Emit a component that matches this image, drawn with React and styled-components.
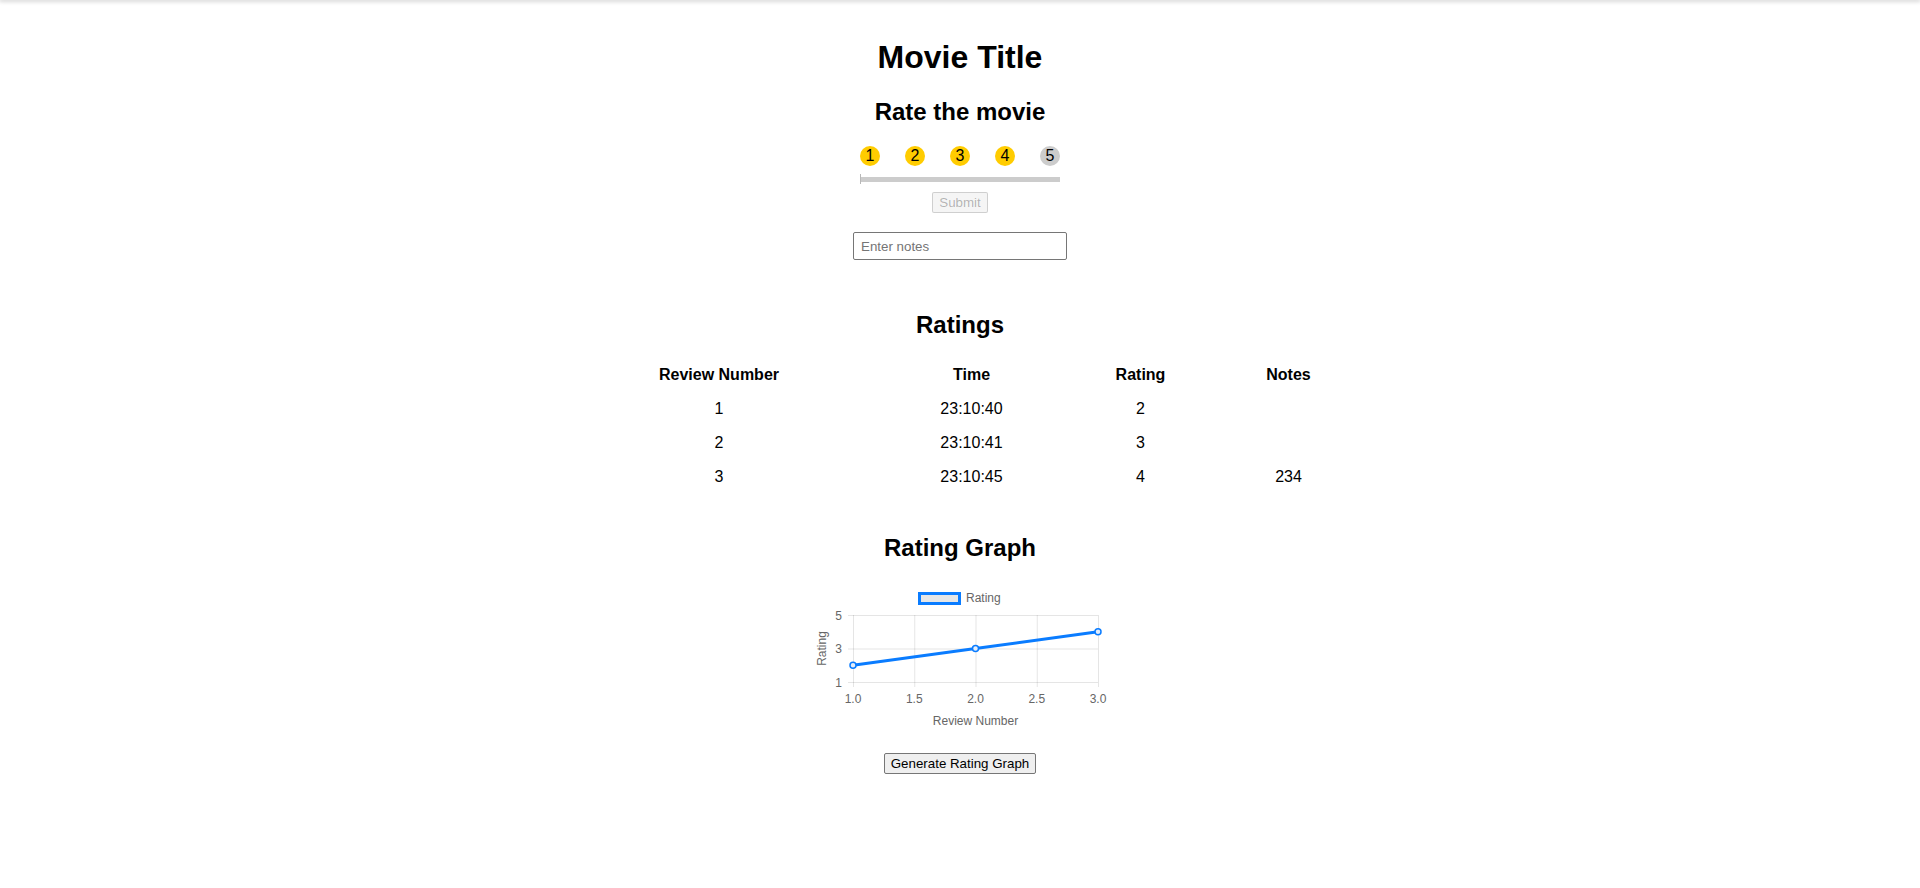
import React from 'react';
import styled, { createGlobalStyle } from 'styled-components';

const GlobalStyle = createGlobalStyle`
	body {
		margin: 0;
		background: #fff;
		color: #000;
		font-family: 'Liberation Sans', Arial, sans-serif;
	}
`;

const ratings = [
	{ id: 1, time: '23:10:40', rating: 2, notes: '' },
	{ id: 2, time: '23:10:41', rating: 3, notes: '' },
	{ id: 3, time: '23:10:45', rating: 4, notes: '234' }
];

const Page = styled.div`
	display: flex;
	flex-direction: column;
	align-items: center;
	min-height: 888px;
`;

const TopShadow = styled.div`
	align-self: stretch;
	height: 0;
	box-shadow: 0 0 4px 1px rgba(0, 0, 0, 0.3);
`;

const Title = styled.h1`
	margin: 39px 0 0;
	font-size: 32px;
	line-height: 37px;
	font-weight: bold;
`;

const Heading = styled.h2`
	margin: ${(p) => p.top}px 0 0;
	font-size: 24px;
	line-height: 28px;
	font-weight: bold;
`;

const StarRow = styled.div`
	display: flex;
	gap: 25px;
	margin-top: 20px;
`;

const Star = styled.span`
	width: 20px;
	height: 20px;
	border-radius: 50%;
	background: ${(p) => (p.active ? '#ffcc00' : '#cccccc')};
	display: flex;
	align-items: center;
	justify-content: center;
	font-size: 16px;
	line-height: 20px;
	color: #000;
`;

const Track = styled.div`
	position: relative;
	width: 200px;
	height: 5px;
	margin-top: 11px;
	background: #cccccc;

	&::before {
		content: '';
		position: absolute;
		left: 0;
		top: -3px;
		width: 1px;
		height: 10px;
		background: #b8b8b8;
	}
`;

const SubmitButton = styled.button`
	margin-top: 10px;
	height: 21px;
	padding: 1px 6px;
	font-family: 'Liberation Sans', Arial, sans-serif;
	font-size: 13.333px;
	color: rgba(16, 16, 16, 0.3);
	background: rgba(239, 239, 239, 0.6);
	border: 1px solid rgba(118, 118, 118, 0.3);
	border-radius: 2px;
`;

const NotesInput = styled.input`
	box-sizing: border-box;
	margin-top: 19px;
	width: 214px;
	height: 28px;
	padding: 5px 7px;
	font-family: 'Liberation Sans', Arial, sans-serif;
	font-size: 13.333px;
	border: 1px solid #767676;
	border-radius: 2px;
	outline: none;

	&::placeholder {
		color: #757575;
	}
`;

const RatingsTable = styled.table`
	margin-top: 19px;
	border-collapse: collapse;
	table-layout: fixed;
	width: 801px;
`;

const HeadCell = styled.th`
	padding: 8px;
	font-size: 16px;
	line-height: 18px;
	font-weight: bold;
	text-align: center;
`;

const Cell = styled.td`
	padding: 8px;
	font-size: 16px;
	line-height: 18px;
	text-align: center;
`;

const ChartSvg = styled.svg`
	display: block;
	margin-top: 13px;
	font-family: 'Liberation Sans', Arial, sans-serif;
`;

const GenerateButton = styled.button`
	margin-top: 18px;
	height: 21px;
	padding: 1px 6px;
	font-family: 'Liberation Sans', Arial, sans-serif;
	font-size: 13.333px;
	color: #000;
	background: #efefef;
	border: 1px solid #767676;
	border-radius: 2px;
`;

// chart area in svg coords
const left = 43;
const right = 288;
const top = 40;
const bottom = 107;
const xPos = (v) => left + ((v - 1) / 2) * (right - left);
const yPos = (v) => bottom - ((v - 1) / 4) * (bottom - top);

function RatingChart() {
	const grid = 'rgba(0,0,0,0.1)';
	const blue = '#0a7cff';
	const xs = [1, 1.5, 2, 2.5, 3];
	const ys = [5, 3, 1];
	const pts = ratings.map((r) => [xPos(r.id), yPos(r.rating)]);

	return (
		<ChartSvg width="300" height="160" viewBox="0 0 300 160">
			<rect x="109.5" y="18.5" width="40" height="10" fill="#e6e6e6" stroke={blue} strokeWidth="3" />
			<text x="156" y="27" fontSize="12" fill="#666">Rating</text>

			{ys.map((v) => (
				<g key={v}>
					<line x1={left - 5} x2={right} y1={yPos(v) + 0.5} y2={yPos(v) + 0.5} stroke={grid} />
					<text x="32" y={yPos(v) + 4.5} fontSize="12" fill="#666" textAnchor="end">
						{v}
					</text>
				</g>
			))}
			{xs.map((v) => (
				<g key={v}>
					<line x1={xPos(v) + 0.5} x2={xPos(v) + 0.5} y1={top} y2={bottom + 5} stroke={grid} />
					<text x={xPos(v)} y="128" fontSize="12" fill="#666" textAnchor="middle">
						{v.toFixed(1)}
					</text>
				</g>
			))}

			<text x="165.5" y="150" fontSize="12" fill="#666" textAnchor="middle">Review Number</text>
			<text transform="translate(15.5 73.5) rotate(-90)" fontSize="12" fill="#666" textAnchor="middle">
				Rating
			</text>

			<polyline points={pts.map((p) => p.join(',')).join(' ')} fill="none" stroke={blue} strokeWidth="3" />
			{pts.map(([x, y], i) => (
				<circle key={i} cx={x} cy={y} r="3" fill="#e6eefa" stroke={blue} strokeWidth="1.5" />
			))}
		</ChartSvg>
	);
}

export default function App() {
	return (
		<Page>
			<GlobalStyle />
			<TopShadow />
			<Title>Movie Title</Title>
			<Heading top={22}>Rate the movie</Heading>
			<StarRow>
				{[1, 2, 3, 4, 5].map((n) => (
					<Star key={n} active={n <= 4}>
						{n}
					</Star>
				))}
			</StarRow>
			<Track />
			<SubmitButton disabled>Submit</SubmitButton>
			<NotesInput type="text" placeholder="Enter notes" />

			<Heading top={51}>Ratings</Heading>
			<RatingsTable>
				<colgroup>
					<col style={{ width: 319 }} />
					<col style={{ width: 186 }} />
					<col style={{ width: 152 }} />
					<col style={{ width: 144 }} />
				</colgroup>
				<thead>
					<tr>
						<HeadCell>Review Number</HeadCell>
						<HeadCell>Time</HeadCell>
						<HeadCell>Rating</HeadCell>
						<HeadCell>Notes</HeadCell>
					</tr>
				</thead>
				<tbody>
					{ratings.map((r) => (
						<tr key={r.id}>
							<Cell>{r.id}</Cell>
							<Cell>{r.time}</Cell>
							<Cell>{r.rating}</Cell>
							<Cell>{r.notes}</Cell>
						</tr>
					))}
				</tbody>
			</RatingsTable>

			<Heading top={40}>Rating Graph</Heading>
			<RatingChart />
			<GenerateButton>Generate Rating Graph</GenerateButton>
		</Page>
	);
}
